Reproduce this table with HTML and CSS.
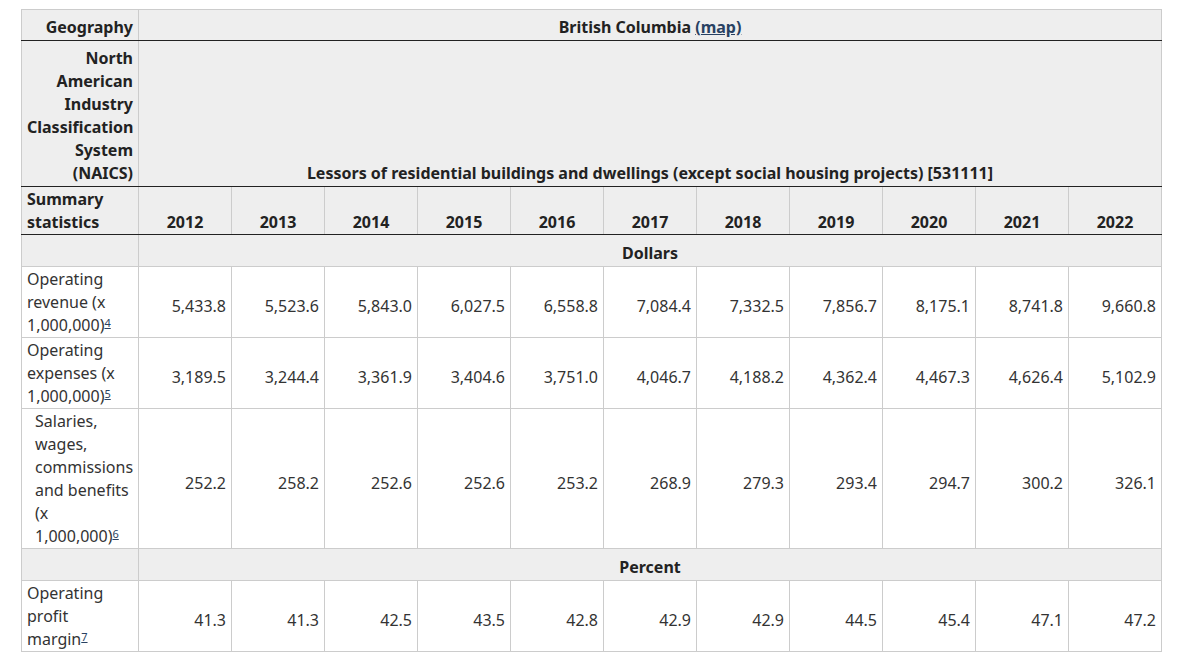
FILE: index.html
```html
<!DOCTYPE html>
<html lang="en">
<head>
<meta charset="utf-8">
<title>Table</title>
<link rel="stylesheet" href="styles.css">
</head>
<body>
<div class="wrap">
<table class="stat">
  <colgroup>
    <col class="c-label">
    <col span="11">
  </colgroup>
  <thead>
    <tr class="r-geo">
      <th class="lh lh-right">Geography</th>
      <th colspan="11" class="ch">British Columbia <a href="#">(map)</a></th>
    </tr>
    <tr class="r-naics">
      <th class="lh lh-right">North American Industry Classification System (NAICS)</th>
      <th colspan="11" class="ch ch-bottom">Lessors of residential buildings and dwellings (except social housing projects) [531111]</th>
    </tr>
    <tr class="r-years">
      <th class="lh lh-left">Summary statistics</th>
      <th class="yr">2012</th>
      <th class="yr">2013</th>
      <th class="yr">2014</th>
      <th class="yr">2015</th>
      <th class="yr">2016</th>
      <th class="yr">2017</th>
      <th class="yr">2018</th>
      <th class="yr">2019</th>
      <th class="yr">2020</th>
      <th class="yr">2021</th>
      <th class="yr">2022</th>
    </tr>
  </thead>
  <tbody>
    <tr class="r-unit">
      <th class="lh"></th>
      <th colspan="11" class="ch">Dollars</th>
    </tr>
    <tr>
      <th class="rl">Operating revenue (x 1,000,000)<sup><a href="#">4</a></sup></th>
      <td>5,433.8</td><td>5,523.6</td><td>5,843.0</td><td>6,027.5</td><td>6,558.8</td><td>7,084.4</td><td>7,332.5</td><td>7,856.7</td><td>8,175.1</td><td>8,741.8</td><td>9,660.8</td>
    </tr>
    <tr>
      <th class="rl">Operating expenses (x 1,000,000)<sup><a href="#">5</a></sup></th>
      <td>3,189.5</td><td>3,244.4</td><td>3,361.9</td><td>3,404.6</td><td>3,751.0</td><td>4,046.7</td><td>4,188.2</td><td>4,362.4</td><td>4,467.3</td><td>4,626.4</td><td>5,102.9</td>
    </tr>
    <tr>
      <th class="rl rl-sub">Salaries, wages, commissions and benefits (x 1,000,000)<sup><a href="#">6</a></sup></th>
      <td>252.2</td><td>258.2</td><td>252.6</td><td>252.6</td><td>253.2</td><td>268.9</td><td>279.3</td><td>293.4</td><td>294.7</td><td>300.2</td><td>326.1</td>
    </tr>
    <tr class="r-unit">
      <th class="lh"></th>
      <th colspan="11" class="ch">Percent</th>
    </tr>
    <tr>
      <th class="rl">Operating profit<br>margin<sup><a href="#">7</a></sup></th>
      <td>41.3</td><td>41.3</td><td>42.5</td><td>43.5</td><td>42.8</td><td>42.9</td><td>42.9</td><td>44.5</td><td>45.4</td><td>47.1</td><td>47.2</td>
    </tr>
  </tbody>
</table>
</div>
</body>
</html>
```
FILE: styles.css
```css
html, body {
  margin: 0;
  padding: 0;
  background: #fff;
}

body {
  font-family: "Noto Sans", "Open Sans", sans-serif;
  font-size: 16px;
  line-height: 23px;
  color: #333;
}

.wrap {
  padding: 9px 0 0 21px;
}

.stat {
  border-collapse: collapse;
  table-layout: fixed;
  width: 1141px;
}

.c-label {
  width: 117px;
}

.stat th,
.stat td {
  border: 1px solid #ccc;
  padding: 0 5px 1px;
}

.stat thead th,
.stat .r-unit th {
  background: #eee;
  font-weight: 700;
  color: #222;
}

.stat .rl {
  background: #fff;
  font-weight: 400;
  text-align: left;
  vertical-align: top;
  padding-top: 1px;
  padding-bottom: 0;
  color: #333;
}

.stat .rl-sub {
  padding-left: 13px;
}

.stat td {
  text-align: right;
  vertical-align: middle;
  padding-top: 9px;
  padding-bottom: 0;
  color: #333;
}

.r-geo th {
  padding-top: 6px;
  padding-bottom: 1px;
  border-bottom: 1px solid #222;
  vertical-align: middle;
}

.r-naics th {
  padding-top: 6px;
  padding-bottom: 1px;
  border-bottom: 1px solid #222;
  vertical-align: bottom;
}

.r-years th {
  padding-top: 1px;
  padding-bottom: 0;
  border-bottom: 1px solid #222;
  vertical-align: bottom;
}

.r-unit th {
  padding-top: 7px;
  padding-bottom: 1px;
  vertical-align: middle;
}

.lh-right {
  text-align: right;
}

.lh-left {
  text-align: left;
}

.ch,
.yr {
  text-align: center;
}

.stat a {
  color: #284162;
  text-decoration: underline;
}

.stat sup {
  font-size: 11px;
  line-height: 1;
  vertical-align: 4px;
}
```
